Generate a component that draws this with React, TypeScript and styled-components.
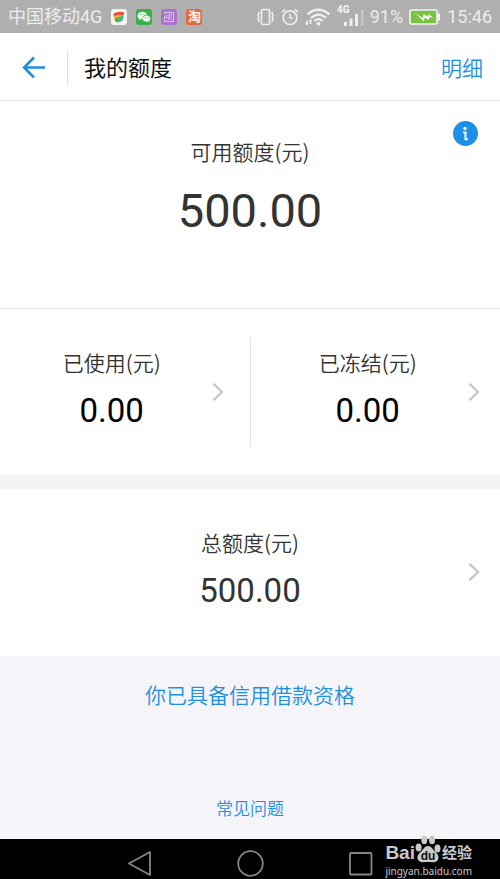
import React from "react";
import styled, { createGlobalStyle } from "styled-components";

const BLUE = "#1e8fe6";

const GlobalStyle = createGlobalStyle`
  *, *::before, *::after { box-sizing: border-box; }
  body {
    margin: 0;
    background: #f4f4f9;
    font-family: Roboto, "Noto Sans CJK SC", sans-serif;
    color: #333;
  }
  button { border: 0; padding: 0; background: none; font: inherit; color: inherit; cursor: pointer; }
  a { text-decoration: none; }
  svg { display: block; flex: none; }
  h1 { margin: 0; font-weight: 400; }
`;

const Page = styled.div`
  display: flex;
  flex-direction: column;
  min-height: 100vh;
`;

const StatusBar = styled.div`
  display: flex;
  align-items: center;
  justify-content: space-between;
  height: 33px;
  padding: 0 8px;
  background: #afafaf;
  color: #ececec;
  font-size: 18px;
  line-height: 24px;
  white-space: nowrap;
`;

const StatusGroup = styled.div<{ $gap: number }>`
  display: flex;
  align-items: center;
  gap: ${(p) => p.$gap}px;
`;

const CharIcon = styled.span`
  width: 16px;
  height: 16px;
  border-radius: 3px;
  background: #e2683f;
  color: #fff5ec;
  font-size: 13px;
  font-weight: 700;
  line-height: 16px;
  text-align: center;
`;

const Header = styled.header`
  display: flex;
  align-items: center;
  height: 68px;
  padding: 2px 17px 0 20px;
  background: #fff;
  border-bottom: 1px solid #e2e2e2;
`;

const BackButton = styled.button`
  display: flex;
  align-items: center;
  width: 48px;
  height: 34px;
  border-right: 1px solid #dcdcdc;
`;

const Title = styled.h1`
  flex: 1;
  padding: 2px 0 0 16px;
  font-size: 22px;
  line-height: 32px;
  color: #111;
`;

const DetailLink = styled.a`
  padding-top: 2px;
  font-size: 21px;
  font-weight: 350;
  line-height: 32px;
  color: ${BLUE};
`;

const Available = styled.section`
  position: relative;
  padding: 34px 0 69px;
  background: #fff;
  border-bottom: 1px solid #e2e2e2;
  text-align: center;
`;

const InfoButton = styled.button`
  position: absolute;
  top: 20px;
  right: 22px;
`;

const Figures = styled.span`
  display: flex;
  flex-direction: column;
  align-items: center;
`;

const Label = styled.span`
  font-family: "Noto Sans CJK SC", sans-serif;
  font-size: 21px;
  font-weight: 350;
  line-height: 32px;
`;

const Amount = styled.span<{ $large?: boolean; $dark?: boolean }>`
  font-size: ${(p) => (p.$large ? 47 : 33)}px;
  line-height: ${(p) => (p.$large ? 56 : 40)}px;
  margin-top: ${(p) => (p.$large ? 16 : 13)}px;
  color: ${(p) => (p.$dark ? "#000" : "#333")};
`;

const Split = styled.section`
  display: grid;
  grid-template-columns: 1fr 1px 1fr;
  padding: 28px 0;
  background: #fff;
`;

const Divider = styled.div`
  background: #e2e2e2;
`;

const CellButton = styled.button<{ $inset: string }>`
  display: grid;
  align-items: center;
  margin: ${(p) => p.$inset};
  min-height: 110px;

  > * { grid-area: 1 / 1; }
  > ${Figures} { padding-bottom: 8px; }
  > svg { justify-self: end; }
`;

const Total = styled.section`
  display: grid;
  padding: 28px 0 29px;
  background: #fff;
  border-top: 14px solid #f4f4f4;
`;

const Notes = styled.footer`
  display: flex;
  flex: 1;
  flex-direction: column;
  align-items: center;
  justify-content: space-between;
  padding: 24px 0 18px;
`;

const NoteLink = styled.a<{ $small?: boolean }>`
  font-size: ${(p) => (p.$small ? 17 : 21)}px;
  font-weight: 350;
  line-height: ${(p) => (p.$small ? 24 : 32)}px;
  color: ${BLUE};
`;

const NavBar = styled.nav`
  position: relative;
  display: flex;
  align-items: center;
  justify-content: center;
  gap: 84px;
  height: 40px;
  padding-top: 9px;
  background: #000;
`;

const Watermark = styled.div`
  position: absolute;
  right: 28px;
  bottom: 0;
  color: #c9c9c9;
`;

const WatermarkBrand = styled.div`
  display: flex;
  align-items: flex-end;
  justify-content: space-between;
  height: 28px;
  font-family: "Liberation Sans", "Noto Sans CJK SC", sans-serif;
  font-size: 19px;
  font-weight: 700;
  line-height: 20px;
`;

const WatermarkSite = styled.div`
  font-family: "Noto Sans", sans-serif;
  font-size: 10px;
  line-height: 16px;
`;

const BrandSuffix = styled.span`
  font-size: 15px;
`;

const Chevron = () => (
  <svg width="12" height="20" viewBox="0 0 12 20" fill="none" stroke="#c8c8cc" strokeWidth="2.4">
    <path d="M1.5 1.8 10 10l-8.500 8.200" />
  </svg>
);

const AppIcons = () => (
  <>
    <svg width="16" height="16" viewBox="0 0 16 16">
      <rect width="16" height="16" rx="3" fill="#f5f5f2" />
      <path d="M2.500 4.500Q8 1.500 13.500 3.500L12 7Q7 4.500 3 8Z" fill="#e8503a" />
      <path d="M3 8Q7 4.500 12 6.500L8 10 4 12Z" fill="#f4b32c" />
      <path d="M3.500 10 8 7.500 7.500 13.500Q4 13.500 3.500 10Z" fill="#55ad46" />
      <path d="M8 8.500 12.500 6Q13.500 12 7.500 13.500Z" fill="#3bb6a5" />
    </svg>
    <svg width="16" height="16" viewBox="0 0 16 16">
      <rect width="16" height="16" rx="3" fill="#37b24a" />
      <path d="M6.300 2.800C3.600 2.800 1.500 4.500 1.500 6.700c0 1.200.7 2.300 1.700 3l-.5 1.600 1.900-1 1.900.3c2.600 0 4.700-1.700 4.700-3.900S9 2.800 6.300 2.800Z" fill="#f4fff4" />
      <path d="M10.500 6.200c-2.300 0-4.200 1.500-4.200 3.400S8.200 13 10.500 13l1.500-.2 1.600.8-.4-1.400c.9-.6 1.500-1.500 1.500-2.600 0-1.900-1.900-3.400-4.200-3.400Z" fill="#f4fff4" stroke="#37b24a" strokeWidth=".7" />
      <g fill="#37b24a"><circle cx="4.700" cy="5.600" r=".7" /><circle cx="8" cy="5.600" r=".7" /><circle cx="9.200" cy="8.800" r=".6" /><circle cx="12" cy="8.800" r=".6" /></g>
    </svg>
    <svg width="16" height="16" viewBox="0 0 16 16" fill="none" stroke="#e0c4f2">
      <rect width="16" height="16" rx="3" fill="#a874d0" stroke="none" />
      <path d="M3.500 5V3.500H12.500V12.500H3.500V7M5.500 5.500V9H8V5M8 5.500H10.500V7.500L7 11M10.500 9.500V11" />
    </svg>
    <CharIcon>淘</CharIcon>
  </>
);

const VibrateIcon = () => (
  <svg width="19" height="18" viewBox="0 0 19 18" fill="none" stroke="#eee" strokeWidth="1.600">
    <rect x="5.500" y="1.500" width="8" height="15" rx="1" />
    <path d="M2.800 4v2l-.8 1 .8 2-.8 2 .8 1.500V14M16.200 4v2l.8 1-.8 2 .8 2-.8 1.500V14" />
  </svg>
);

const AlarmIcon = () => (
  <svg width="18" height="18" viewBox="0 0 18 18" fill="none" stroke="#eee" strokeWidth="1.600">
    <circle cx="9" cy="9.700" r="6.800" />
    <path d="M9 5.700v4.300h3.200M1 4.200 4.300 1.300M17 4.200l-3.300-2.900" />
  </svg>
);

const WifiIcon = () => (
  <svg width="26" height="18" viewBox="0 0 26 18" fill="none" stroke="#eee" strokeWidth="2.300">
    <path d="M2.500 6.300Q13.500 -2.800 24.500 6.300M6 9.800Q13.500 3.200 21 9.800M9.500 13Q13.500 9.200 17.500 13" />
    <circle cx="13.500" cy="15.700" r="1.900" fill="#eee" stroke="none" />
    <path d="M2 12.500v4M5.500 12v4" strokeWidth="1.600" />
    <path d="m0 14.800 2 2.500 2-2.500ZM3.500 13.500l2-2.500 2 2.500Z" fill="#eee" stroke="none" />
  </svg>
);

const SignalIcon = () => (
  <svg width="27" height="28" viewBox="0 0 27 28">
    <text x="0" y="10" fontFamily="Roboto, sans-serif" fontSize="10" fontWeight="700" fill="#f4f4f4">4G</text>
    <path d="M7 19h3v4H7ZM12.500 15.500h3V23h-3ZM18 11h3v12h-3Z" fill="#eee" />
    <path d="M24 7h2.500v16H24Z" fill="#c5c5c5" />
  </svg>
);

const BatteryIcon = () => (
  <svg width="32" height="16" viewBox="0 0 32 16">
    <rect x="1" y="1" width="27" height="14" rx="1.500" fill="#7cc242" stroke="#f4f4f4" strokeWidth="1.600" />
    <path d="M29 4.500h2v7h-2Z" fill="#f4f4f4" />
    <path d="m6 4 8 5 .5-4 4.500 2.500 1-2.500 4 4-3.500-1-.5 3-4.500-2.500-.5 4Z" fill="#fff" />
  </svg>
);

const Paw = () => (
  <svg width="26" height="28" viewBox="0 0 26 28" fill="#c9c9c9">
    <ellipse cx="3.600" cy="12.500" rx="3" ry="3.900" />
    <ellipse cx="9.300" cy="5" rx="3" ry="4.200" />
    <ellipse cx="17" cy="5" rx="3" ry="4.200" />
    <ellipse cx="22.500" cy="13.500" rx="3" ry="3.900" />
    <path d="M13 11c-3.500 0-4.500 3.500-7.500 6-3 2.500-4 6-2 8.500s5.500 1.500 9.500 1.500 7.500 1 9.500-1.500 1-6-2-8.500c-3-2.500-4-6-7.500-6Z" />
    <text x="13" y="25" textAnchor="middle" fontFamily="Liberation Sans, sans-serif" fontSize="12" fontWeight="700" fill="#111">du</text>
  </svg>
);

interface QuotaCellProps {
  label: string;
  amount: string;
  inset: string;
  dark?: boolean;
}

const QuotaCell = ({ label, amount, inset, dark }: QuotaCellProps) => (
  <CellButton type="button" $inset={inset}>
    <Figures>
      <Label>{label}</Label>
      <Amount $dark={dark}>{amount}</Amount>
    </Figures>
    <Chevron />
  </CellButton>
);

export default function App() {
  return (
    <Page>
      <GlobalStyle />
      <StatusBar>
        <StatusGroup $gap={9}>
          <span>中国移动4G</span>
          <AppIcons />
        </StatusGroup>
        <StatusGroup $gap={6}>
          <VibrateIcon />
          <AlarmIcon />
          <WifiIcon />
          <SignalIcon />
          <span>91%</span>
          <BatteryIcon />
          <span>15:46</span>
        </StatusGroup>
      </StatusBar>

      <Header>
        <BackButton type="button" aria-label="返回">
          <svg width="27" height="24" viewBox="0 0 27 24" fill="none" stroke={BLUE} strokeWidth="2.500">
            <path d="M25 11.500H4M14 1.500 4 11.500l10 10" />
          </svg>
        </BackButton>
        <Title>我的额度</Title>
        <DetailLink href="#details">明细</DetailLink>
      </Header>

      <Available>
        <Figures>
          <Label>可用额度(元)</Label>
          <Amount $large>500.00</Amount>
        </Figures>
        <InfoButton type="button" aria-label="说明">
          <svg width="25" height="25" viewBox="0 0 25 25">
            <circle cx="12.500" cy="12.500" r="12.500" fill={BLUE} />
            <circle cx="12" cy="7.500" r="1.700" fill="#fff" />
            <path d="M10 10.500h3.500v7H15v1.800h-3.500v-7H10Z" fill="#fff" />
          </svg>
        </InfoButton>
      </Available>

      <Split>
        <QuotaCell label="已使用(元)" amount="0.00" inset="0 26px 0 0" dark />
        <Divider />
        <QuotaCell label="已冻结(元)" amount="0.00" inset="0 20px 0 5px" dark />
      </Split>

      <Total>
        <QuotaCell label="总额度(元)" amount="500.00" inset="0 20px" />
      </Total>

      <Notes>
        <NoteLink href="#qualification">你已具备信用借款资格</NoteLink>
        <NoteLink href="#faq" $small>常见问题</NoteLink>
      </Notes>

      <NavBar>
        <button type="button" aria-label="后退">
          <svg width="27" height="27" viewBox="0 0 27 27" fill="none" stroke="#858585" strokeWidth="1.800" strokeLinejoin="round">
            <path d="M24 2v23L3 13.500Z" />
          </svg>
        </button>
        <button type="button" aria-label="主屏幕">
          <svg width="27" height="27" viewBox="0 0 27 27" fill="none" stroke="#858585" strokeWidth="1.800">
            <circle cx="13.500" cy="13.500" r="12.300" />
          </svg>
        </button>
        <button type="button" aria-label="最近任务">
          <svg width="27" height="27" viewBox="0 0 27 27" fill="none" stroke="#858585" strokeWidth="1.800">
            <rect x="2" y="3" width="21.500" height="21.500" rx="1" />
          </svg>
        </button>
        <Watermark>
          <WatermarkBrand>
            <span>Bai</span>
            <Paw />
            <BrandSuffix>经验</BrandSuffix>
          </WatermarkBrand>
          <WatermarkSite>jingyan.baidu.com</WatermarkSite>
        </Watermark>
      </NavBar>
    </Page>
  );
}
